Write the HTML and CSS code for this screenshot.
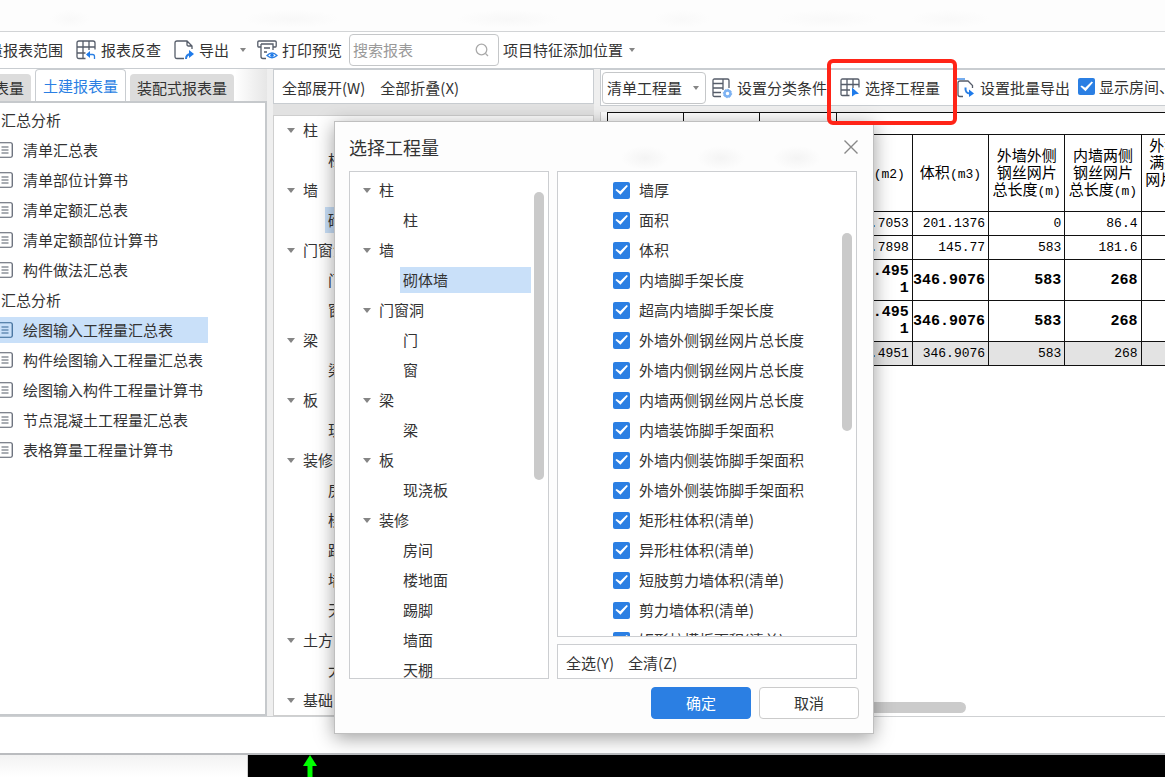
FILE: index.html
```html
<!DOCTYPE html>
<html lang="zh-CN">
<head>
<meta charset="utf-8">
<title>查看报表</title>
<link rel="stylesheet" href="styles.css">
</head>
<body>
<svg class="defs" aria-hidden="true">
  <symbol id="doc" viewBox="0 0 16 16">
    <rect x=".75" y=".75" width="14.5" height="14.5" rx="1.5" fill="none" stroke="currentColor" stroke-width="1.2"/>
    <path d="M4.5 5h7M4.5 8h7M4.5 11h7" stroke="currentColor" stroke-width="1.1"/>
  </symbol>
</svg>
<div class="window">
  <header class="titlebar"></header>
  <nav class="toolbar">
    <button class="tool cut">量报表范围</button>
    <button class="tool">
      <svg class="icon" viewBox="0 0 20 20"><path d="M9.5 18.5H3Q1 18.500 1 16.500V3Q1 1 3 1H17Q19 1 19 3V9.500M1 7H19M1 13H9.500M7 1V18.500M13 1V10" class="line"/><path d="M11 14.500H16.500Q18.500 14.500 18.500 16.500V19" class="blue-line"/><path d="M10 14.500L14 11V18Z" class="blue"/></svg>
      报表反查
    </button>
    <button class="tool">
      <svg class="icon" viewBox="0 0 20 20"><path d="M10 18.500H3Q1 18.500 1 16.500V3Q1 1 3 1H13L18 6V9M13 1V4.500Q13 6 14.500 6H18" class="line"/><path d="M12 19Q12 14.500 16.500 14" class="blue-line thick"/><path d="M15 10L20 14L15 18Z" class="blue"/></svg>
      导出
    </button>
    <i class="caret"></i>
    <button class="tool">
      <svg class="icon" viewBox="0 0 20 20"><path d="M4 7H1.500Q.8 7 .8 6V2Q.8 1 2 1H18Q19.200 1 19.200 2V6Q19.200 7 18.500 7H16M4 4H16V10M4 4V16.500Q4 18.500 6 18.500H9M7 8H13M7 12H10" class="line"/><path d="M10 15.500Q15 10.500 20 15.500Q15 20 10 15.500Z" class="blue-line"/><circle cx="15" cy="15.300" r="1.700" class="blue"/></svg>
      打印预览
    </button>
    <label class="search">
      <input type="text" placeholder="搜索报表" aria-label="搜索报表">
      <svg viewBox="0 0 14 14"><circle cx="6.500" cy="6.500" r="5.300"/><path d="M10.500 10.500L13 13"/></svg>
    </label>
    <button class="tool feature">项目特征添加位置<i class="caret"></i></button>
  </nav>

  <main class="main">
    <section class="reports">
      <div class="tabs">
        <button class="tab first">表量</button>
        <button class="tab active">土建报表量</button>
        <button class="tab">装配式报表量</button>
      </div>
      <ul class="report-list">
        <li class="group">汇总分析</li>
        <li><svg><use href="#doc"/></svg>清单汇总表</li>
        <li><svg><use href="#doc"/></svg>清单部位计算书</li>
        <li><svg><use href="#doc"/></svg>清单定额汇总表</li>
        <li><svg><use href="#doc"/></svg>清单定额部位计算书</li>
        <li><svg><use href="#doc"/></svg>构件做法汇总表</li>
        <li class="group">汇总分析</li>
        <li class="selected"><svg><use href="#doc"/></svg>绘图输入工程量汇总表</li>
        <li><svg><use href="#doc"/></svg>构件绘图输入工程量汇总表</li>
        <li><svg><use href="#doc"/></svg>绘图输入构件工程量计算书</li>
        <li><svg><use href="#doc"/></svg>节点混凝土工程量汇总表</li>
        <li><svg><use href="#doc"/></svg>表格算量工程量计算书</li>
      </ul>
    </section>

    <section class="elements">
      <div class="bar">
        <button class="text-button">全部展开(W)</button>
        <button class="text-button">全部折叠(X)</button>
      </div>
      <ul class="tree outer">
        <li class="node"><i class="caret"></i>柱</li>
        <li class="leaf">柱</li>
        <li class="node"><i class="caret"></i>墙</li>
        <li class="leaf selected">砌体墙</li>
        <li class="node"><i class="caret"></i>门窗洞</li>
        <li class="leaf">门</li>
        <li class="leaf">窗</li>
        <li class="node"><i class="caret"></i>梁</li>
        <li class="leaf">梁</li>
        <li class="node"><i class="caret"></i>板</li>
        <li class="leaf">现浇板</li>
        <li class="node"><i class="caret"></i>装修</li>
        <li class="leaf">房间</li>
        <li class="leaf">楼地面</li>
        <li class="leaf">踢脚</li>
        <li class="leaf">墙面</li>
        <li class="leaf">天棚</li>
        <li class="node"><i class="caret"></i>土方</li>
        <li class="leaf">大开挖</li>
        <li class="node"><i class="caret"></i>基础</li>
      </ul>
    </section>

    <section class="result">
      <div class="bar actions">
        <span class="select"><select aria-label="工程量类型"><option>清单工程量</option></select><i class="caret"></i></span>
        <button class="tool">
          <svg class="icon" viewBox="0 0 20 20"><path d="M9 18.500H2.500Q1 18.500 1 17V2.500Q1 1 2.500 1H15.500Q17 1 17 2.500V10M1 5.500H11M1 10H11M1 14.500H9M11 1V12" class="line"/><circle cx="15.500" cy="15.500" r="3" fill="none" stroke="#7db2f2" stroke-width="2.500"/><circle cx="15.500" cy="15.500" r="4.200" fill="none" stroke="#7db2f2" stroke-width="1" stroke-dasharray="1.600 1.600"/></svg>
          设置分类条件
        </button>
        <button class="tool pick">
          <svg class="icon" viewBox="0 0 20 20"><path d="M9.500 17.500H2.500Q1 17.500 1 16V2.500Q1 1 2.500 1H17.500Q19 1 19 2.500V9.500M1 6.500H19M1 12H10M7 1V17.500M13 1V10" class="line"/><path d="M12 9.500L19 15.800L15.300 16.200L12 18.500Z" class="blue"/></svg>
          选择工程量
        </button>
        <button class="tool">
          <svg class="icon" viewBox="0 0 20 20"><path d="M1 1H10" class="blue-line"/><path d="M8 18.500H5Q3 18.500 3 16.500V5Q3 3 5 3H13L17.500 7.500V10M1 3V14" class="line"/><path d="M10.500 9.500Q10 15.500 15 15.500" class="blue-line thick"/><path d="M14 11.500L19 15.500L14 19Z" class="blue"/></svg>
          设置批量导出
        </button>
        <label class="check"><input type="checkbox" checked>显示房间、</label>
      </div>
      <div class="sheet">
        <table>
          <tr class="top"><th rowspan="2"></th><th rowspan="2"></th><th rowspan="2"></th><th colspan="6"></th></tr>
          <tr class="head">
            <th>面积<span class="unit">(m2)</span></th>
            <th>体积<span class="unit">(m3)</span></th>
            <th>外墙外侧<br>钢丝网片<br>总长度<span class="unit">(m)</span></th>
            <th>内墙两侧<br>钢丝网片<br>总长度<span class="unit">(m)</span></th>
            <th>外墙外侧<br>满挂钢丝<br>网片面积<span class="unit">(<br>m2)</span></th>
            <th></th>
          </tr>
          <tr><td></td><td></td><td></td><td>.7053</td><td>201.1376</td><td>0</td><td>86.4</td><td></td><td></td></tr>
          <tr><td></td><td></td><td></td><td>.7898</td><td>145.77</td><td>583</td><td>181.6</td><td></td><td></td></tr>
          <tr class="sum"><td></td><td></td><td></td><td>.495<br>1</td><td>346.9076</td><td>583</td><td>268</td><td></td><td></td></tr>
          <tr class="sum"><td></td><td></td><td></td><td>.495<br>1</td><td>346.9076</td><td>583</td><td>268</td><td></td><td></td></tr>
          <tr class="total"><td></td><td></td><td></td><td>.4951</td><td>346.9076</td><td>583</td><td>268</td><td></td><td></td></tr>
        </table>
        <div class="hscroll"></div>
      </div>
    </section>
  </main>
  <footer class="status"></footer>
</div>

<div class="canvas">
  <div class="dock"></div>
  <div class="model"><svg class="axis" viewBox="0 0 14 22"><path d="M7 0L14 11H0Z"/><path d="M4.500 11H9.500V22H4.500Z"/></svg></div>
</div>

<div class="dialog" role="dialog" aria-labelledby="dialog-title">
  <div class="dialog-head">
    <h1 id="dialog-title">选择工程量</h1>
    <button class="close" aria-label="关闭"><svg viewBox="0 0 14 14"><path d="M.5 .5L13.500 13.500M13.500 .5L.5 13.500"/></svg></button>
  </div>
  <div class="dialog-body">
    <div class="box side">
      <ul class="tree">
        <li class="node"><i class="caret"></i>柱</li>
        <li class="leaf">柱</li>
        <li class="node"><i class="caret"></i>墙</li>
        <li class="leaf selected">砌体墙</li>
        <li class="node"><i class="caret"></i>门窗洞</li>
        <li class="leaf">门</li>
        <li class="leaf">窗</li>
        <li class="node"><i class="caret"></i>梁</li>
        <li class="leaf">梁</li>
        <li class="node"><i class="caret"></i>板</li>
        <li class="leaf">现浇板</li>
        <li class="node"><i class="caret"></i>装修</li>
        <li class="leaf">房间</li>
        <li class="leaf">楼地面</li>
        <li class="leaf">踢脚</li>
        <li class="leaf">墙面</li>
        <li class="leaf">天棚</li>
      </ul>
      <i class="thumb tall"></i>
    </div>
    <div class="choices">
      <div class="box options">
        <div class="option-list">
          <label class="check"><input type="checkbox" checked>墙厚</label>
          <label class="check"><input type="checkbox" checked>面积</label>
          <label class="check"><input type="checkbox" checked>体积</label>
          <label class="check"><input type="checkbox" checked>内墙脚手架长度</label>
          <label class="check"><input type="checkbox" checked>超高内墙脚手架长度</label>
          <label class="check"><input type="checkbox" checked>外墙外侧钢丝网片总长度</label>
          <label class="check"><input type="checkbox" checked>外墙内侧钢丝网片总长度</label>
          <label class="check"><input type="checkbox" checked>内墙两侧钢丝网片总长度</label>
          <label class="check"><input type="checkbox" checked>内墙装饰脚手架面积</label>
          <label class="check"><input type="checkbox" checked>外墙内侧装饰脚手架面积</label>
          <label class="check"><input type="checkbox" checked>外墙外侧装饰脚手架面积</label>
          <label class="check"><input type="checkbox" checked>矩形柱体积(清单)</label>
          <label class="check"><input type="checkbox" checked>异形柱体积(清单)</label>
          <label class="check"><input type="checkbox" checked>短肢剪力墙体积(清单)</label>
          <label class="check"><input type="checkbox" checked>剪力墙体积(清单)</label>
          <label class="check"><input type="checkbox" checked>矩形柱模板面积(清单)</label>
        </div>
        <i class="thumb"></i>
      </div>
      <div class="box quick">
        <button class="text-button">全选(Y)</button>
        <button class="text-button">全清(Z)</button>
      </div>
    </div>
  </div>
  <div class="dialog-foot">
    <button class="btn primary">确定</button>
    <button class="btn">取消</button>
  </div>
</div>
<div class="highlight"></div>
</body>
</html>
```

FILE: styles.css
```css
* { box-sizing: border-box; }
body {
  margin: 0;
  height: 100vh;
  display: flex;
  flex-direction: column;
  overflow: hidden;
  position: relative;
  background: #fff;
  color: #333;
  font: 15px/30px "Noto Sans CJK SC", sans-serif;
}
button, input, select { font: inherit; color: inherit; }
button { border: 0; padding: 0; background: none; white-space: nowrap; }
ul { list-style: none; margin: 0; padding: 0; }
.defs { position: absolute; width: 0; height: 0; }

.window { flex: 1; min-height: 0; display: flex; flex-direction: column; border-bottom: 2px solid #babcbf; }
.titlebar {
  height: 32px;
  border-bottom: 1px solid #d2d4d6;
  background:
    radial-gradient(ellipse 20px 9px at 70px 19px, #f9f9f9, transparent),
    radial-gradient(ellipse 48px 9px at 292px 19px, #f8f8f8, transparent),
    radial-gradient(ellipse 52px 9px at 508px 19px, #f8f8f8, transparent),
    radial-gradient(ellipse 28px 9px at 682px 19px, #f9f9f9, transparent),
    radial-gradient(ellipse 52px 9px at 828px 19px, #f9f9f9, transparent),
    radial-gradient(ellipse 40px 9px at 950px 19px, #f9f9f9, transparent),
    #fdfdfd;
}
.toolbar { height: 36px; display: flex; align-items: center; gap: 13px; overflow: hidden; }
.tool { display: flex; align-items: center; gap: 5px; flex: none; }
.cut { margin-left: -12px; }
.icon { width: 20px; height: 20px; flex: none; overflow: visible; }
.line { fill: none; stroke: #555c69; stroke-width: 1.3; }
.blue-line { fill: none; stroke: #2b7fe3; stroke-width: 1.3; }
.thick { stroke-width: 2; }
.blue { fill: #1f7bea; }
.caret { flex: none; width: 0; height: 0; border: 4px solid transparent; border-top: 5px solid #858585; border-bottom: 0; }
.toolbar .caret { border-width: 4px 3px 0; margin: 0 -2px; }
.search { display: flex; align-items: center; width: 150px; height: 32px; flex: none; margin: 0 -9px 0 -6px; padding: 0 9px 0 3px; border: 1px solid #c5c7c9; border-radius: 4px; }
.search input { flex: 1; min-width: 0; border: 0; padding: 0; outline: 0; background: none; }
.search input::placeholder { color: #999; }
.search svg { width: 14px; height: 14px; fill: none; stroke: #aaa; stroke-width: 1.3; }
.toolbar .feature { gap: 8px; }

.main { flex: 1; min-height: 0; display: flex; gap: 6px; background: #efefef; border-top: 1px solid #c9cdd1; border-bottom: 1px solid #cfd1d3; }
.reports { width: 267px; flex: none; display: flex; flex-direction: column; }
.tabs { height: 32px; display: flex; align-items: flex-end; gap: 4px; background: linear-gradient(90deg, #fff 88%, #e6e6e6); }
.tab { height: 27px; padding: 0 7px; background: #dcdcdc; border-radius: 4px 4px 0 0; line-height: 27px; }
.tab.first { margin-left: -13px; }
.tab.active { height: 32px; border: 1px solid #c9cdd1; border-bottom: 0; background: #fff; color: #2b7fe3; }
.report-list { flex: 1; min-height: 0; padding-top: 4px; overflow: hidden; background: #fff; border: solid #c6c9cc; border-width: 2px 2px 2px 0; }
.report-list li { display: flex; align-items: center; height: 26px; margin-bottom: 4px; width: 208px; white-space: nowrap; gap: 10px; }
.report-list svg { width: 16px; height: 16px; margin-left: -3px; flex: none; color: #555c69; }
.report-list .group { padding-left: 1px; }
.selected { background: #c9e0f9; }
.report-list .selected svg { color: #356594; }

.elements { width: 321px; flex: none; display: flex; flex-direction: column; gap: 11px; background: #e2e2e2; }
.bar { height: 35px; flex: none; display: flex; align-items: center; border: 1px solid #c9cdd1; background: #fff; }
.elements .bar { gap: 15px; padding: 3px 8px 0; }
.tree li { display: flex; align-items: center; height: 26px; margin: 0 0 4px; padding-left: 3px; white-space: nowrap; }
.tree .node { gap: 8px; padding-left: 13px; }
.tree .leaf { margin-left: 51px; }
.tree.outer { flex: 1; min-height: 0; padding-top: 1px; background: #fff; border: 1px solid #cfcfcf; overflow: hidden; }

.result { flex: 1; min-width: 0; display: flex; flex-direction: column; gap: 6px; }
.bar.actions { height: 37px; overflow: hidden; border-right: 0; padding-left: 1px; }
.select { display: flex; align-items: center; flex: none; width: 104px; height: 32px; margin-right: 6px; padding-right: 6px; border: 1px solid #c5c7c9; border-radius: 4px; }
.select select { flex: 1; min-width: 0; height: 30px; padding: 0 0 0 4px; appearance: none; border: 0; background: none; }
.select .caret, .feature .caret { border-width: 4px 3px 0; }
.actions .tool { padding-top: 1px; margin-right: 15px; }
.actions .tool.pick { margin: 0 15px 0 -2px; }
.actions .check { margin-left: -7px; gap: 4px; padding-bottom: 2px; }
.check { display: flex; align-items: center; gap: 9px; white-space: nowrap; }
.check input { appearance: none; flex: none; width: 17px; height: 17px; margin: 0; border-radius: 2px; background: #2b7fe3; }
.check input::before { content: ""; display: block; width: 17px; height: 17px; }
.check input:checked::before { background: #fff; clip-path: polygon(14% 50%, 22% 44%, 42% 58%, 80% 20%, 88% 26%, 44% 78%); }
.sheet { flex: 1; min-height: 0; display: flex; flex-direction: column; justify-content: space-between; padding-left: 6px; background: #fff; border-left: 1px solid #cfcfcf; overflow: hidden; }
table { border-collapse: collapse; table-layout: fixed; width: 687px; color: #000; background: #fff; line-height: 17px; }
th, td { border: 1px solid #111; padding: 0; }
th { font-weight: 400; white-space: nowrap; }
.unit { font: 13px/17px "Liberation Mono", monospace; }
td { height: 24px; padding-right: 3px; text-align: right; font-family: "Liberation Mono", monospace; font-size: 13px; }
.top { height: 22px; }
.head { height: 77px; }
.sum td { height: 41px; font-size: 15px; font-weight: 700; }
.total { background: #e3e3e3; }
.hscroll { width: 359px; height: 11px; margin-bottom: 3px; border-radius: 6px; background: #cbcbcb; }
.status { height: 36px; flex: none; background: #fff; }

.canvas { height: 22px; flex: none; display: flex; background: #fff; }
.dock { width: 248px; border-right: 1px solid #cfcfcf; background: linear-gradient(#f2f2f2, #fff); }
.model { flex: 1; background: #000; }
.axis { display: block; width: 14px; height: 22px; margin-left: 55px; fill: #0f0; }

.dialog {
  position: absolute;
  left: 334px;
  top: 121px;
  width: 540px;
  padding: 0 14px 14px;
  border: 1px solid #bfbfbf;
  background:
    radial-gradient(ellipse 24px 12px at 310px 36px, #f4f4f4, transparent),
    radial-gradient(ellipse 24px 12px at 386px 36px, #f4f4f4, transparent),
    radial-gradient(ellipse 24px 12px at 462px 36px, #f4f4f4, transparent),
    #fdfdfd;
  box-shadow: 0 4px 18px rgba(0, 0, 0, .38);
}
.dialog-head { display: flex; align-items: center; justify-content: space-between; height: 49px; }
h1 { margin: 0; font-size: 18px; font-weight: 400; }
.close { display: flex; padding: 1px; }
.close svg { width: 14px; height: 14px; fill: none; stroke: #888; stroke-width: 1.4; }
.dialog-body { display: grid; grid-template-columns: 200px 1fr; gap: 8px; height: 508px; margin-right: 2px; }
.box { border: 1px solid #ccced1; background: #fff; overflow: hidden; }
.side, .options { display: flex; justify-content: space-between; min-height: 0; }
.side .tree { flex: 1; padding-top: 5px; }
.side .leaf { margin-left: 50px; }
.thumb { flex: none; width: 10px; height: 198px; margin: 61px 4px 0 3px; border-radius: 5px; background: #cacaca; }
.thumb.tall { height: 288px; margin-top: 20px; }
.choices { display: flex; flex-direction: column; gap: 7px; min-height: 0; }
.options { flex: 1; }
.option-list { padding: 3px 0 0 55px; }
.option-list .check { height: 30px; }
.quick { height: 35px; flex: none; display: flex; align-items: center; gap: 14px; padding: 3px 8px 0; }
.dialog-foot { display: flex; justify-content: flex-end; gap: 8px; padding-top: 8px; }
.btn { width: 100px; height: 32px; border: 1px solid #cbcbcb; border-radius: 4px; background: #fff; }
.btn.primary { border-color: #2b7fe3; background: #2b7fe3; color: #fff; }
.highlight { position: absolute; left: 827px; top: 59px; width: 130px; height: 66px; border: 4px solid #ff2417; border-radius: 6px; pointer-events: none; }
```
